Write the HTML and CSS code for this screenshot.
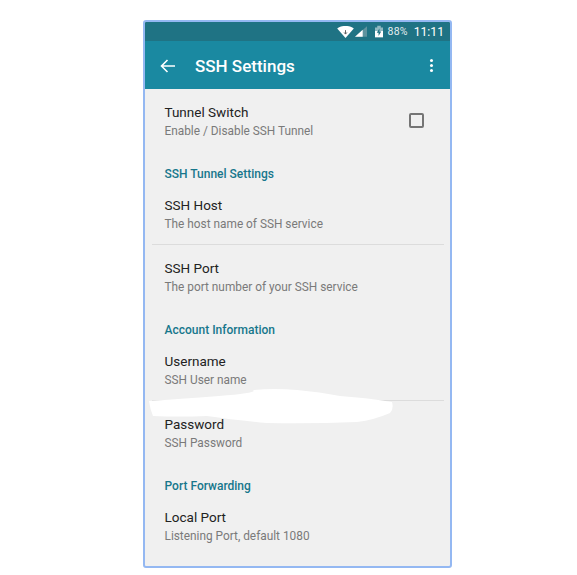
FILE: index.html
```html
<!DOCTYPE html>
<html lang="en">
<head>
<meta charset="utf-8">
<title>SSH Settings</title>
<link rel="stylesheet" href="styles.css">
</head>
<body>
<div class="phone">
  <div class="status">
    <svg class="wifi" width="17" height="12" viewBox="0 0 18 13"><path d="M0 2.600C5-1 13-1 18 2.600L9 13z" fill="#fff"/><path d="M9 4.500v4M7.500 7L9 8.800 10.500 7" stroke="#555" stroke-width="1" fill="none"/></svg>
    <svg class="signal" width="12" height="11" viewBox="0 0 14 12"><path d="M0 12L14 0v12z" fill="#5f939e"/><path d="M0 12L9 4v8z" fill="#fff"/></svg>
    <svg class="battery" width="8" height="13" viewBox="0 0 9 13"><path d="M0 2h2.500V0h4v2H9v11H0z" fill="#8fb9c2"/><path d="M0 6h9v7H0z" fill="#fff"/><path d="M5 3L2 8h2v3.500L7 6.500H5z" fill="#1f7384"/></svg>
    <span class="pct">88%</span>
    <span class="time">11:11</span>
  </div>
  <div class="toolbar">
    <svg class="back" width="16" height="14" viewBox="0 0 16 14"><path d="M15 7H2M7.500 1L1.500 7l6 6" stroke="#fff" stroke-width="1.600" fill="none"/></svg>
    <span class="title">SSH Settings</span>
    <span class="more"><i></i><i></i><i></i></span>
  </div>
  <div class="list">
    <div class="row with-check">
      <div>
        <div class="name">Tunnel Switch</div>
        <div class="desc">Enable / Disable SSH Tunnel</div>
      </div>
      <span class="check"></span>
    </div>
    <div class="cat">SSH Tunnel Settings</div>
    <div class="row"><div class="name">SSH Host</div><div class="desc">The host name of SSH service</div></div>
    <div class="sep"></div>
    <div class="row"><div class="name">SSH Port</div><div class="desc">The port number of your SSH service</div></div>
    <div class="cat">Account Information</div>
    <div class="row"><div class="name">Username</div><div class="desc">SSH User name</div></div>
    <div class="sep"></div>
    <div class="row"><div class="name">Password</div><div class="desc">SSH Password</div></div>
    <div class="cat">Port Forwarding</div>
    <div class="row"><div class="name">Local Port</div><div class="desc">Listening Port, default 1080</div></div>
  </div>
  <svg class="blob" width="245" height="35" viewBox="0 0 245 35"><path d="M0 12Q30 10 70 7T104 1Q125 -1 148 1T191 7Q220 9 243 13Q245 20 241 24Q225 31 208 33Q160 35 118 34Q85 31 58 27Q30 28 4 27Q1 20 0 12z" fill="#fff"/></svg>
</div>
</body>
</html>
```

FILE: styles.css
```css
* { box-sizing: border-box; }
html, body { margin: 0; background: #fff; }
body { padding: 20px 0 0 143px; font-family: Roboto, "Liberation Sans", sans-serif; }
.phone {
  position: relative;
  width: 309px;
  height: 548px;
  border: 2px solid #94b8f2;
  border-radius: 3px;
  background: #f0f0f0;
  overflow: hidden;
}
.status {
  height: 19px;
  background: #1f7384;
  display: flex;
  align-items: center;
  justify-content: flex-end;
  padding-right: 6px;
  color: #fff;
}
.wifi { margin-right: 1px; }
.signal { margin-right: 8px; }
.battery { margin-right: 5px; }
.pct { font-size: 10.500px; margin-right: 6px; color: #e4eef0; letter-spacing: .2px; }
.time { font-size: 12.200px; letter-spacing: 0; }
.toolbar {
  height: 48px;
  background: #1a89a1;
  display: flex;
  align-items: center;
  color: #fff;
  padding: 1px 16px 0 15px;
}
.back { margin-right: 19px; }
.title { font-size: 17px; font-weight: 500; flex: 1; }
.more { display: flex; flex-direction: column; gap: 2px; margin-right: 1px; }
.more i { width: 3px; height: 3px; background: #fff; border-radius: 50%; display: block; }
.row { height: 62px; padding: 15px 0 0 19.500px; }
.with-check { display: flex; justify-content: space-between; }
.name { font-size: 13.500px; line-height: 17px; color: #222; }
.desc { font-size: 11.850px; line-height: 16px; margin-top: 2px; color: #7a7a7a; }
.check {
  width: 15px; height: 15px;
  border: 2px solid #757575;
  border-radius: 2px;
  margin: 9px 26px 0 0;
}
.cat {
  height: 31px;
  padding: 16px 0 0 19.500px;
  font-size: 12px;
  line-height: 15px;
  font-weight: 500;
  color: #17778c;
}
.sep { height: 1px; margin: 0 6px 0 7px; background: #dcdcdc; }
.blob { position: absolute; left: 4px; top: 367px; }
```
